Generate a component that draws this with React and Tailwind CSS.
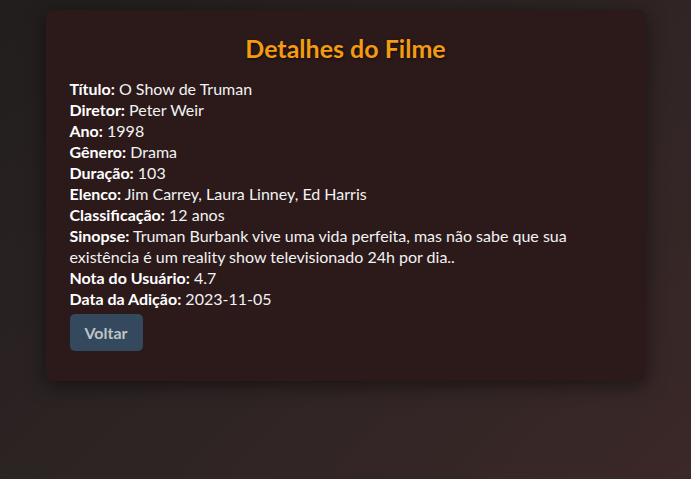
import React from "react";

const movie = [
  ["Título", "O Show de Truman"],
  ["Diretor", "Peter Weir"],
  ["Ano", "1998"],
  ["Gênero", "Drama"],
  ["Duração", "103"],
  ["Elenco", "Jim Carrey, Laura Linney, Ed Harris"],
  ["Classificação", "12 anos"],
  ["Sinopse", "Truman Burbank vive uma vida perfeita, mas não sabe que sua existência é um reality show televisionado 24h por dia.."],
  ["Nota do Usuário", "4.7"],
  ["Data da Adição", "2023-11-05"],
];

export default function App() {
  return (
    <div className="min-h-screen bg-[linear-gradient(135deg,#221e1e_0%,#2e2424_50%,#3b2828_100%)] pt-[10px] font-['Lato',sans-serif]">
      <div className="mx-auto w-[600px] rounded-lg bg-[#2c1a1b] px-6 pt-6 pb-[30px] shadow-[0_4px_20px_rgba(0,0,0,0.5)]">
        <h2 className="mb-[16px] text-center text-[25px] font-bold leading-[28px] text-[#f39c12] [text-shadow:1px_1px_3px_rgba(0,0,0,0.6)]">
          Detalhes do Filme
        </h2>
        <div className="text-[16px] leading-[21px] text-[#f2f2f2]">
          {movie.map(([label, value]) => (
            <p key={label}>
              <strong className="font-bold text-white">{label}:</strong> {value}
            </p>
          ))}
        </div>
        <button className="mt-[5px] rounded-[5px] bg-[#34495e] px-[15px] py-2 text-[16px] font-bold leading-[21px] text-[#bdc3c7]">
          Voltar
        </button>
      </div>
    </div>
  );
}
